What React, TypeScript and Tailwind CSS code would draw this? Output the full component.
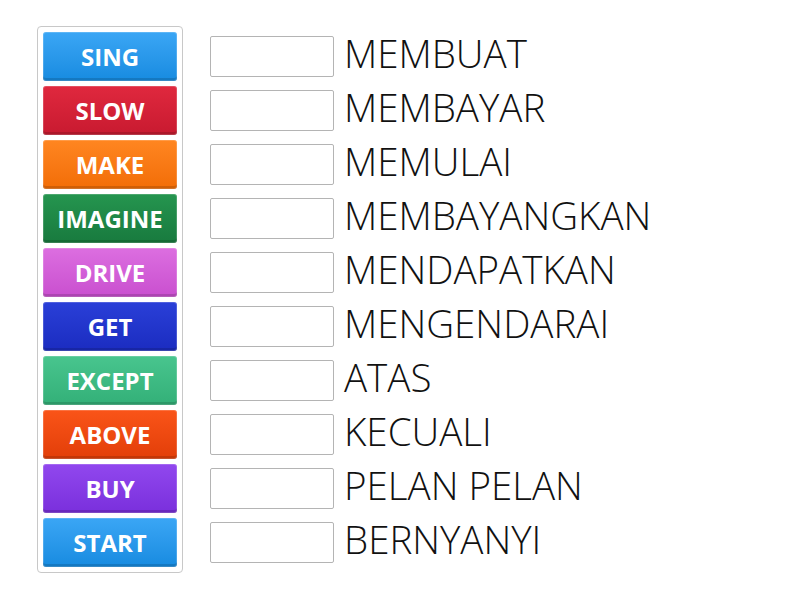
const words = [
  { label: 'SING', cls: 'from-[#3aa6f5] to-[#168be0]' },
  { label: 'SLOW', cls: 'from-[#e0283e] to-[#c81a30]' },
  { label: 'MAKE', cls: 'from-[#ff8620] to-[#f26d05]' },
  { label: 'IMAGINE', cls: 'from-[#25954f] to-[#187a3e]' },
  { label: 'DRIVE', cls: 'from-[#dc6ee0] to-[#c94fcf]' },
  { label: 'GET', cls: 'from-[#2a3fd8] to-[#1b2cc0]' },
  { label: 'EXCEPT', cls: 'from-[#48c58e] to-[#33b078]' },
  { label: 'ABOVE', cls: 'from-[#fa5418] to-[#e23e08]' },
  { label: 'BUY', cls: 'from-[#9147ee] to-[#7a2fdc]' },
  { label: 'START', cls: 'from-[#3aa6f5] to-[#168be0]' },
];

const meanings = [
  'MEMBUAT',
  'MEMBAYAR',
  'MEMULAI',
  'MEMBAYANGKAN',
  'MENDAPATKAN',
  'MENGENDARAI',
  'ATAS',
  'KECUALI',
  'PELAN PELAN',
  'BERNYANYI',
];

export default function App() {
  return (
    <div
      className="w-[800px] h-[600px] bg-white flex items-start pl-[37px] pt-[26px]"
      style={{ fontFamily: '"Open Sans", "Noto Sans", sans-serif' }}
    >
      {/* Word tiles */}
      <div className="w-[146px] border border-[#c8c8c8] rounded-[4px] p-[5px] flex flex-col gap-[5px]">
        {words.map((w) => (
          <div
            key={w.label}
            className={`h-[49px] rounded-[3px] bg-linear-to-b ${w.cls} flex items-center justify-center text-white font-bold text-[24px] leading-none shadow-[inset_0_-3px_0_rgba(0,0,0,0.14),inset_0_0_0_1px_rgba(255,255,255,0.18)]`}
          >
            {w.label}
          </div>
        ))}
      </div>

      {/* Answer slots */}
      <div className="ml-[27px] pt-[10px] flex flex-col gap-[13px]">
        {meanings.map((m) => (
          <div key={m} className="flex items-center h-[41px]">
            <div className="w-[124px] h-[41px] border border-[#b4b4b4] rounded-[2px] bg-white shrink-0" />
            <span className="ml-[10px] -mt-[6px] text-[38.5px] font-[350] leading-none text-[#111] whitespace-nowrap">{m}</span>
          </div>
        ))}
      </div>
    </div>
  );
}
